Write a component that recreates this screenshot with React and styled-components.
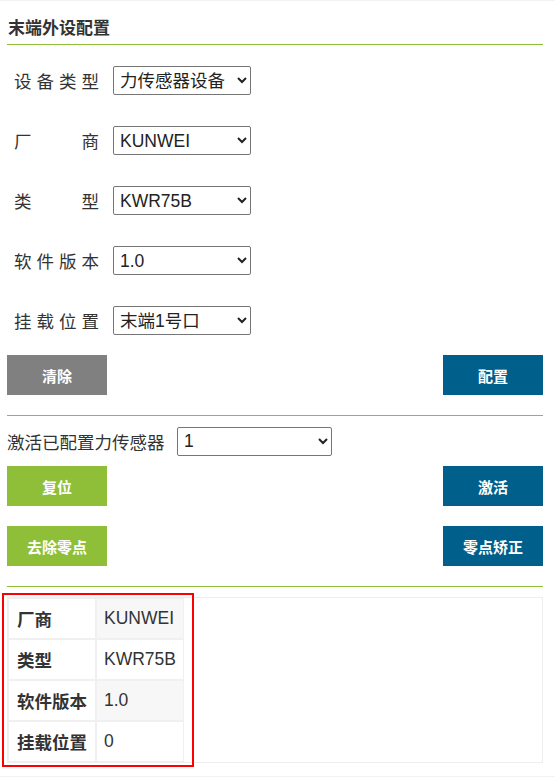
import React from "react";
import styled, { createGlobalStyle } from "styled-components";

const GlobalStyle = createGlobalStyle`
  body {
    margin: 0;
    background: #fff;
    font-family: "Noto Sans CJK SC", "Noto Sans", sans-serif;
    color: #333;
  }
`;

const fields = [
  { label: "设备类型", value: "力传感器设备" },
  { label: "厂商", value: "KUNWEI" },
  { label: "类型", value: "KWR75B" },
  { label: "软件版本", value: "1.0" },
  { label: "挂载位置", value: "末端1号口" },
];

const info = [
  ["厂商", "KUNWEI"],
  ["类型", "KWR75B"],
  ["软件版本", "1.0"],
  ["挂载位置", "0"],
];

const App = () => {
  return (
    <Page>
      <GlobalStyle />
      <Title>末端外设配置</Title>

      <Form>
        {fields.map((f) => (
          <Row key={f.label}>
            <Label>{f.label}</Label>
            <Select $width={138} defaultValue={f.value}>
              <option>{f.value}</option>
            </Select>
          </Row>
        ))}
      </Form>

      <ButtonRow $top={20}>
        <Button $color="#808080">清除</Button>
        <Button $color="#005f8b">配置</Button>
      </ButtonRow>

      <Section>
        <ActivateRow>
          <ActivateLabel>激活已配置力传感器</ActivateLabel>
          <Select $width={155} defaultValue="1">
            <option>1</option>
          </Select>
        </ActivateRow>
        <ButtonRow $top={10}>
          <Button $color="#8fbf38">复位</Button>
          <Button $color="#005f8b">激活</Button>
        </ButtonRow>
        <ButtonRow $top={20}>
          <Button $color="#8fbf38">去除零点</Button>
          <Button $color="#005f8b">零点矫正</Button>
        </ButtonRow>
      </Section>

      <Section $pad={10}>
        <Panel>
          <Highlight />
          <InfoTable>
            <tbody>
              {info.map(([k, v], i) => (
                <tr key={k}>
                  <Th>{k}</Th>
                  <Td $striped={i % 2 === 0}>{v}</Td>
                </tr>
              ))}
            </tbody>
          </InfoTable>
        </Panel>
      </Section>
    </Page>
  );
};

export default App;

const Page = styled.div`
  border-top: 1px solid #f2f2f2;
  border-bottom: 1px solid #f2f2f2;
  padding: 0 12px 13px 7px;
`;

const Title = styled.div`
  padding: 13px 0 5px 1px;
  line-height: 25px;
  font-size: 17px;
  font-weight: bold;
  color: #333;
  border-bottom: 1px solid #8fbf38;
`;

const Form = styled.div`
  display: flex;
  flex-direction: column;
  gap: 31px;
  padding-top: 21px;
`;

const Row = styled.div`
  display: flex;
  align-items: center;
  padding-left: 7px;
  height: 29px;
`;

const Label = styled.span`
  width: 87px;
  margin-right: 12px;
  font-size: 17.5px;
  color: #333;
  text-align: justify;
  text-align-last: justify;
  white-space: nowrap;
  letter-spacing: 2px;
`;

const Select = styled.select`
  width: ${(p) => p.$width}px;
  height: 29px;
  font-size: 17.5px;
  font-family: "Liberation Sans", "Noto Sans CJK SC", sans-serif;
  color: #222;
  border: 1px solid #767676;
  border-radius: 2px;
  background: #fff;
  padding: 0 2px;
`;

const ButtonRow = styled.div`
  display: flex;
  justify-content: space-between;
  margin-top: ${(p) => p.$top}px;
`;

const Button = styled.button`
  width: 100px;
  height: 40px;
  border: none;
  border-radius: 0;
  background: ${(p) => p.$color};
  color: #fff;
  font-family: "Noto Sans CJK SC", sans-serif;
  font-size: 15px;
  font-weight: bold;
  padding: 0;
`;

const Section = styled.div`
  margin-top: 20px;
  border-top: 1px solid #8fbf38;
  padding-top: ${(p) => p.$pad || 0}px;
`;

const ActivateRow = styled.div`
  display: flex;
  align-items: center;
  margin-top: 10px;
  height: 30px;
`;

const ActivateLabel = styled.span`
  width: 158px;
  margin-right: 12px;
  font-size: 17.5px;
  color: #333;
  white-space: nowrap;
`;

const Panel = styled.div`
  position: relative;
  border: 1px solid #eee;
`;

const Highlight = styled.div`
  position: absolute;
  left: -6px;
  top: -5px;
  width: 188px;
  height: 170px;
  border: 2px solid #ff0000;
  pointer-events: none;
`;

const InfoTable = styled.table`
  border-collapse: separate;
  border-spacing: 0;
  font-size: 17.5px;
  color: #333;
`;

const Th = styled.th`
  width: 70px;
  height: 39px;
  padding: 0 8px;
  text-align: left;
  font-weight: bold;
  border: 1px solid #f0f0f0;
  background: #fff;
  font-family: "Noto Sans CJK SC", sans-serif;
`;

const Td = styled.td`
  width: 72px;
  height: 39px;
  padding: 0 7px;
  border: 1px solid #f0f0f0;
  background: ${(p) => (p.$striped ? "#f7f7f7" : "#fff")};
  font-family: "Liberation Sans", sans-serif;
`;
